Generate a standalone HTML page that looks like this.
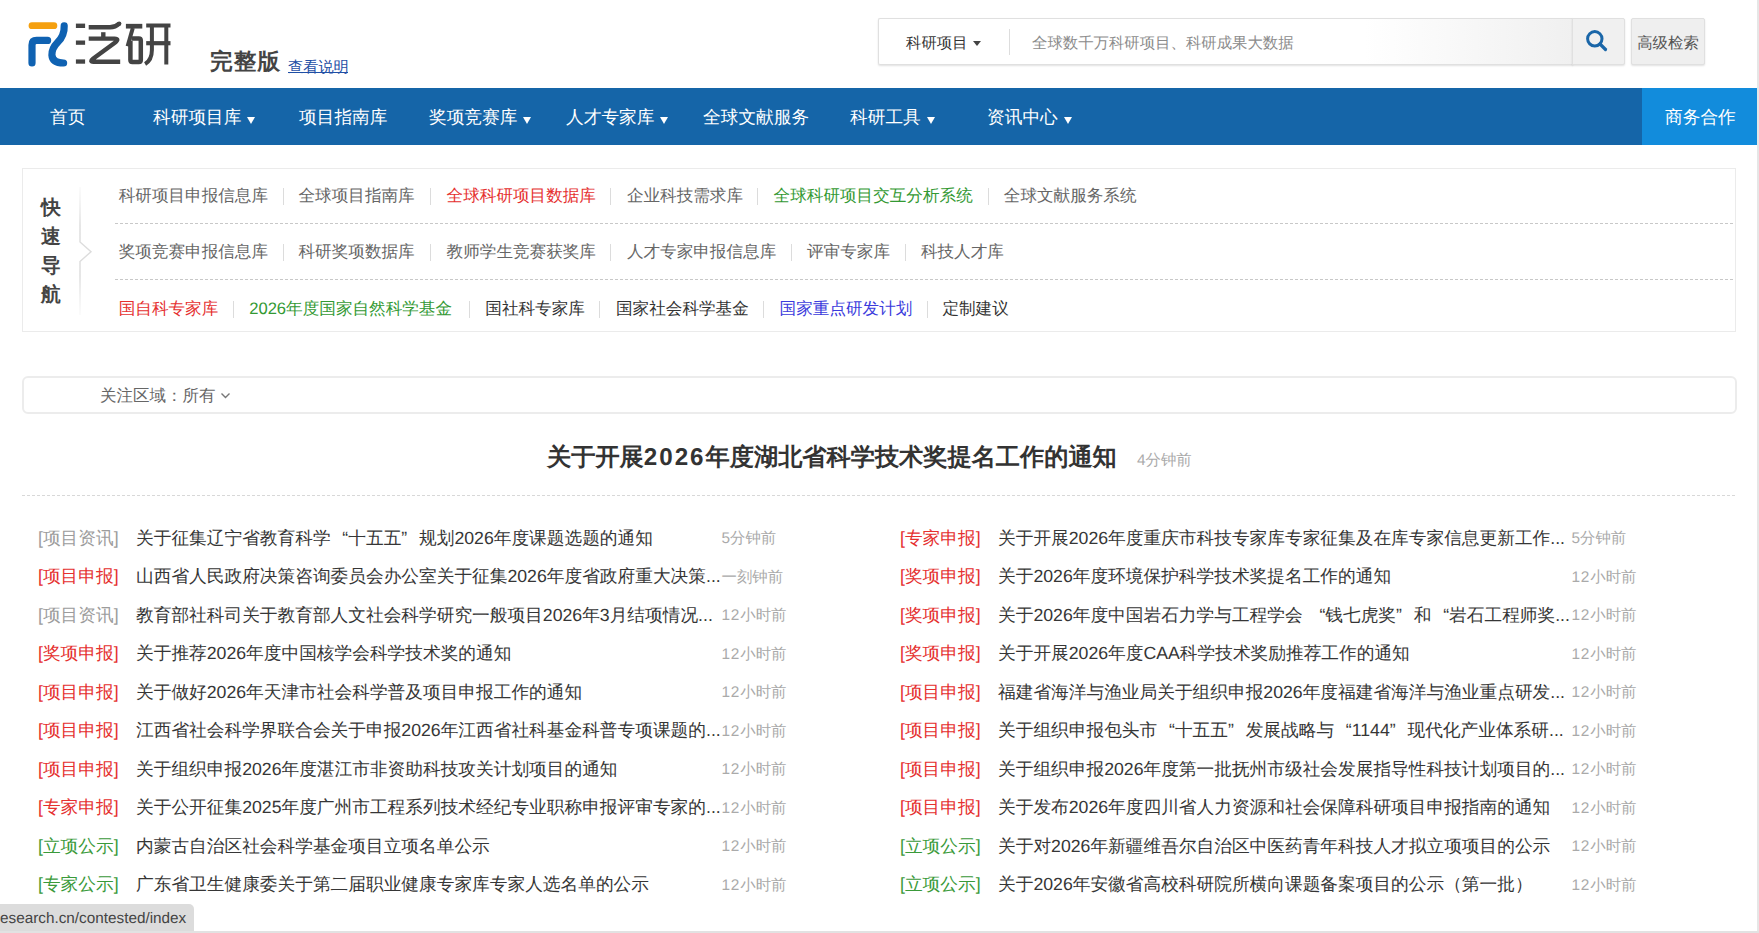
<!DOCTYPE html>
<html><head><meta charset="utf-8">
<style>
*{margin:0;padding:0;box-sizing:border-box}
html,body{width:1759px;height:933px;overflow:hidden;background:#fff}
body{font-family:"Liberation Sans",sans-serif;text-rendering:geometricPrecision;color:#333;position:relative}
.a{position:absolute;white-space:nowrap}
#frameR{position:absolute;left:1757px;top:0;width:2px;height:933px;background:#e6e6e6}
#frameB{position:absolute;left:0;top:931px;width:1759px;height:2px;background:#e2e2e2}

/* header */
#ver{left:210px;top:45.5px;font-size:22.6px;letter-spacing:1.1px;line-height:32px;font-weight:bold;color:#444}
#explain{left:288px;top:56.5px;font-size:15.2px;line-height:22px;color:#1f4fa5}
#expl_u{left:288px;top:72px;width:60px;height:1px;background:#1f4fa5}
#search{left:878px;top:18px;width:695px;height:47px;border:1px solid #e0e0e0;border-right:none;border-radius:2px 0 0 2px;
  background:linear-gradient(to right,#fff 0,#fff 70%,#f0f0f0 100%);box-shadow:0 1px 2px rgba(0,0,0,.12)}
#stype{left:906px;top:32.5px;font-size:15.4px;line-height:22px;font-weight:500;color:#333}
#stype i{position:absolute;left:67px;top:8.5px;width:0;height:0;border-left:4px solid transparent;border-right:4px solid transparent;border-top:5px solid #444}
#sdiv{left:1009px;top:29px;width:1px;height:26px;background:#ddd}
#sph{left:1032px;top:32.5px;font-size:15.4px;line-height:22px;color:#8c8c8c}
#sbtn{left:1572px;top:18px;width:53px;height:47px;border:1px solid #e0e0e0;border-radius:0 2px 2px 0;background:#f0f0f0;box-shadow:0 1px 2px rgba(0,0,0,.12)}
#adv{left:1631px;top:18px;width:74px;height:47px;border:1px solid #e0e0e0;border-radius:2px;background:#efefef;box-shadow:0 1px 2px rgba(0,0,0,.12);
  font-size:15.4px;line-height:50px;font-weight:500;color:#555;text-align:center}

/* nav */
#nav{left:0;top:88px;width:1757px;height:57px;background:#1565a8}
#biz{left:1642px;top:88px;width:115px;height:57px;background:#128cdc}
.ni{top:89.3px;line-height:57px;font-size:17.7px;color:#fff}
.ni i{display:inline-block;width:0;height:0;border-left:4px solid transparent;border-right:4px solid transparent;border-top:7px solid #fff;margin-left:6px;vertical-align:middle;position:relative;top:1.5px}

/* quick nav */
#qbox{left:22px;top:168px;width:1714px;height:164px;border:1px solid #ebebeb;background:#fff}
.qt{left:41px;font-size:19.8px;line-height:29px;font-weight:bold;color:#444}
.ql{left:115px;width:1620px;height:1px;background-image:linear-gradient(to right,#c8c8c8 0,#c8c8c8 3px,transparent 3px);background-size:5px 1px}
.qr{font-size:16.6px;line-height:24px;color:#666}
.qs{width:1px;height:17px;background:#dcdcdc}
.qr.red{color:#e5302f}.qr.grn{color:#339933}.qr.blk{color:#333}.qr.blu{color:#3b3bdc}

/* filter */
#fbox{left:21.5px;top:376px;width:1715px;height:38px;border:2px solid #ececec;border-radius:6px}
#ftxt{left:100px;top:385px;font-size:16.5px;line-height:22px;color:#666}

/* headline */
#head{left:547px;top:442px;font-size:24.2px;line-height:32px;font-weight:bold;color:#333}
#htime{left:1137px;top:450.7px;font-size:15.4px;line-height:20px;color:#aaa}
#hline{left:22px;top:495px;width:1714px;height:1px;background-image:linear-gradient(to right,#d8d8d8 0,#d8d8d8 3px,transparent 3px);background-size:5px 1px}

/* news rows */
.row{position:absolute;height:24px;width:800px;white-space:nowrap;font-size:17.7px;line-height:24px}
.row>span{position:absolute;top:0}
.tag{left:0}
.tag.g{color:#9c9c9c}.tag.r{color:#e5302f}.tag.n{color:#3a9a3a}
.tt{left:98px;color:#363636}
.tm{left:683.5px;font-size:15.4px;color:#aaa;top:1.8px !important}
.colR .tm{left:671.5px}
.d{letter-spacing:0.8px}
.q1{display:inline-block;width:1em;text-align:right}.q2{display:inline-block;width:1em;text-align:left}

/* status bar */
#status{left:0;top:904px;width:194px;height:27px;background:#dcdcdc;border-top-right-radius:5px}
#stxt{left:0;top:908px;font-size:15.3px;line-height:22px;color:#444;letter-spacing:0}
</style></head>
<body>
<!-- logo -->
<svg class="a" style="left:0;top:0" width="190" height="85" viewBox="0 0 190 85">
  <rect x="28.6" y="22.3" width="28.7" height="6.7" rx="3.35" fill="#f5a00f"/>
  <path d="M32 63 V45 Q32 40.4 36.6 40.4 H47.6" fill="none" stroke="#0f62b2" stroke-width="7.2" stroke-linecap="round" stroke-linejoin="round"/>
  <path d="M64.2 25.8 Q64.6 35.5 57.5 42.5 Q51.6 48.5 51.9 55 Q52.4 63 63.6 63" fill="none" stroke="#0f62b2" stroke-width="7.2" stroke-linecap="round"/>
  <g fill="#444">
    <rect x="75.9" y="23.6" width="9.2" height="4.4"/>
    <rect x="75.9" y="40.5" width="9.2" height="4.3"/>
    <rect x="75.9" y="59.4" width="9.2" height="4.3"/>
  </g>
  <g fill="none" stroke="#444" stroke-width="4.4" stroke-linecap="butt" stroke-linejoin="round">
    <path d="M88.7 27.2 H110 Q115.5 27.2 119.2 23.6"/><circle cx="119.2" cy="23.6" r="2.2" fill="#444" stroke="none"/>
    <path d="M103.3 32.2 V37"/>
    <path d="M88.7 38.6 H114.5 Q119.5 38.8 115.5 42.2 L93 58.8 Q89.2 61.7 93.5 61.7 H120.2"/>
    <path d="M125.9 26.2 H142.3" stroke-width="4.7"/>
    <path d="M132.8 28 L127.6 46.2" stroke-width="4"/>
    <path d="M130.4 41 V60 Q130.4 62 132.4 62 H138.8 Q140.8 62 140.8 60 V40.6 Q140.8 38.6 138.8 38.6 H131.5" stroke-width="4.5"/>
    <path d="M146.2 25.5 H170.5" stroke-width="4"/>
    <path d="M146.2 43.2 H170.5" stroke-width="4.2"/>
    <path d="M151.9 27 V50 Q151.9 60 145.1 64" stroke-width="4"/>
    <path d="M166.3 27 V64.5" stroke-width="4"/>
  </g>
</svg>
<div class="a" id="ver">完整版</div>
<div class="a" id="explain">查看说明</div><div class="a" id="expl_u"></div>

<div class="a" id="search"></div>
<div class="a" id="stype">科研项目<i></i></div>
<div class="a" id="sdiv"></div>
<div class="a" id="sph">全球数千万科研项目、科研成果大数据</div>
<div class="a" id="sbtn"></div>
<svg class="a" style="left:1584px;top:28px" width="26" height="26" viewBox="0 0 26 26">
  <circle cx="10.8" cy="10.8" r="7.2" fill="none" stroke="#1a66a8" stroke-width="3"/>
  <path d="M16 16 L21.5 21.5" stroke="#1a66a8" stroke-width="3.2" stroke-linecap="round"/>
</svg>
<div class="a" id="adv">高级检索</div>

<div class="a" id="nav"></div>
<div class="a" id="biz"></div>
<div class="a ni" style="left:50px">首页</div>
<div class="a ni" style="left:153px">科研项目库<i></i></div>
<div class="a ni" style="left:299px">项目指南库</div>
<div class="a ni" style="left:429px">奖项竞赛库<i></i></div>
<div class="a ni" style="left:566px">人才专家库<i></i></div>
<div class="a ni" style="left:703px">全球文献服务</div>
<div class="a ni" style="left:850px">科研工具<i></i></div>
<div class="a ni" style="left:987px">资讯中心<i></i></div>
<div class="a ni" style="left:1665px">商务合作</div>

<div class="a" id="qbox"></div>
<div class="a qt" style="top:193.5px">快</div>
<div class="a qt" style="top:222.5px">速</div>
<div class="a qt" style="top:251.5px">导</div>
<div class="a qt" style="top:280.5px">航</div>
<svg class="a" style="left:74px;top:185px" width="24" height="132" viewBox="0 0 24 132">
  <defs><linearGradient id="dg" x1="0" y1="0" x2="0" y2="1"><stop offset="0" stop-color="#e4e4e4" stop-opacity="0.2"/><stop offset="0.3" stop-color="#dcdcdc"/><stop offset="0.7" stop-color="#dcdcdc"/><stop offset="1" stop-color="#e4e4e4" stop-opacity="0.2"/></linearGradient></defs><path d="M6 2 V57 L17 66.7 L6 76.5 V130" fill="none" stroke="url(#dg)" stroke-width="1.4"/>
</svg>
<div class="a ql" style="top:223px"></div>
<div class="a ql" style="top:279px"></div>
<div class="a qr " style="left:118.7px;top:183.5px">科研项目申报信息库</div>
<div class="a qs" style="left:283.2px;top:188.0px"></div>
<div class="a qr " style="left:298.5px;top:183.5px">全球项目指南库</div>
<div class="a qs" style="left:430.2px;top:188.0px"></div>
<div class="a qr red" style="left:446.6px;top:183.5px">全球科研项目数据库</div>
<div class="a qs" style="left:610.1px;top:188.0px"></div>
<div class="a qr " style="left:626.9px;top:183.5px">企业科技需求库</div>
<div class="a qs" style="left:757.1px;top:188.0px"></div>
<div class="a qr grn" style="left:773.6px;top:183.5px">全球科研项目交互分析系统</div>
<div class="a qs" style="left:987.6px;top:188.0px"></div>
<div class="a qr " style="left:1003.8px;top:183.5px">全球文献服务系统</div>
<div class="a qr " style="left:118.7px;top:239.7px">奖项竞赛申报信息库</div>
<div class="a qs" style="left:283.2px;top:244.2px"></div>
<div class="a qr " style="left:298.5px;top:239.7px">科研奖项数据库</div>
<div class="a qs" style="left:430.2px;top:244.2px"></div>
<div class="a qr " style="left:446.6px;top:239.7px">教师学生竞赛获奖库</div>
<div class="a qs" style="left:610.1px;top:244.2px"></div>
<div class="a qr " style="left:626.9px;top:239.7px">人才专家申报信息库</div>
<div class="a qs" style="left:790.5px;top:244.2px"></div>
<div class="a qr " style="left:807.0px;top:239.7px">评审专家库</div>
<div class="a qs" style="left:904.7px;top:244.2px"></div>
<div class="a qr " style="left:920.9px;top:239.7px">科技人才库</div>
<div class="a qr red" style="left:118.7px;top:296.5px">国自科专家库</div>
<div class="a qs" style="left:232.8px;top:301.0px"></div>
<div class="a qr grn" style="left:249.2px;top:296.5px">2026年度国家自然科学基金</div>
<div class="a qs" style="left:469.4px;top:301.0px"></div>
<div class="a qr blk" style="left:485.3px;top:296.5px">国社科专家库</div>
<div class="a qs" style="left:599.0px;top:301.0px"></div>
<div class="a qr blk" style="left:616.0px;top:296.5px">国家社会科学基金</div>
<div class="a qs" style="left:763.2px;top:301.0px"></div>
<div class="a qr blu" style="left:779.6px;top:296.5px">国家重点研发计划</div>
<div class="a qs" style="left:926.9px;top:301.0px"></div>
<div class="a qr blk" style="left:942.4px;top:296.5px">定制建议</div>

<div class="a" id="fbox"></div>
<div class="a" id="ftxt">关注区域：所有</div>
<svg class="a" style="left:219px;top:391px" width="14" height="10" viewBox="0 0 14 10">
  <path d="M2.5 2.5 L6.5 6.5 L10.5 2.5" fill="none" stroke="#777" stroke-width="1.4"/>
</svg>

<div class="a" id="head">关于开展<span style="letter-spacing:2px">2026</span>年度湖北省科学技术奖提名工作的通知</div>
<div class="a" id="htime">4分钟前</div>
<div class="a" id="hline"></div>

<div class="row" style="left:38px;top:525.50px"><span class="tag g">[项目资讯]</span><span class="tt">关于征集辽宁省教育科学<span class="q1">“</span>十五五<span class="q2">”</span>规划2026年度课题选题的通知</span><span class="tm">5分钟前</span></div>
<div class="row" style="left:38px;top:564.00px"><span class="tag r">[项目申报]</span><span class="tt">山西省人民政府决策咨询委员会办公室关于征集2026年度省政府重大决策...</span><span class="tm">一刻钟前</span></div>
<div class="row" style="left:38px;top:602.50px"><span class="tag g">[项目资讯]</span><span class="tt">教育部社科司关于教育部人文社会科学研究一般项目2026年3月结项情况...</span><span class="tm"><span class=d>12</span>小时前</span></div>
<div class="row" style="left:38px;top:641.00px"><span class="tag r">[奖项申报]</span><span class="tt">关于推荐2026年度中国核学会科学技术奖的通知</span><span class="tm"><span class=d>12</span>小时前</span></div>
<div class="row" style="left:38px;top:679.50px"><span class="tag r">[项目申报]</span><span class="tt">关于做好2026年天津市社会科学普及项目申报工作的通知</span><span class="tm"><span class=d>12</span>小时前</span></div>
<div class="row" style="left:38px;top:718.00px"><span class="tag r">[项目申报]</span><span class="tt">江西省社会科学界联合会关于申报2026年江西省社科基金科普专项课题的...</span><span class="tm"><span class=d>12</span>小时前</span></div>
<div class="row" style="left:38px;top:756.50px"><span class="tag r">[项目申报]</span><span class="tt">关于组织申报2026年度湛江市非资助科技攻关计划项目的通知</span><span class="tm"><span class=d>12</span>小时前</span></div>
<div class="row" style="left:38px;top:795.00px"><span class="tag r">[专家申报]</span><span class="tt">关于公开征集2025年度广州市工程系列技术经纪专业职称申报评审专家的...</span><span class="tm"><span class=d>12</span>小时前</span></div>
<div class="row" style="left:38px;top:833.50px"><span class="tag n">[立项公示]</span><span class="tt">内蒙古自治区社会科学基金项目立项名单公示</span><span class="tm"><span class=d>12</span>小时前</span></div>
<div class="row" style="left:38px;top:872.00px"><span class="tag n">[专家公示]</span><span class="tt">广东省卫生健康委关于第二届职业健康专家库专家人选名单的公示</span><span class="tm"><span class=d>12</span>小时前</span></div>
<div class="row colR" style="left:900px;top:525.50px"><span class="tag r">[专家申报]</span><span class="tt">关于开展2026年度重庆市科技专家库专家征集及在库专家信息更新工作...</span><span class="tm">5分钟前</span></div>
<div class="row colR" style="left:900px;top:564.00px"><span class="tag r">[奖项申报]</span><span class="tt">关于2026年度环境保护科学技术奖提名工作的通知</span><span class="tm"><span class=d>12</span>小时前</span></div>
<div class="row colR" style="left:900px;top:602.50px"><span class="tag r">[奖项申报]</span><span class="tt">关于2026年度中国岩石力学与工程学会 <span class="q1">“</span>钱七虎奖<span class="q2">”</span>和<span class="q1">“</span>岩石工程师奖...</span><span class="tm"><span class=d>12</span>小时前</span></div>
<div class="row colR" style="left:900px;top:641.00px"><span class="tag r">[奖项申报]</span><span class="tt">关于开展2026年度CAA科学技术奖励推荐工作的通知</span><span class="tm"><span class=d>12</span>小时前</span></div>
<div class="row colR" style="left:900px;top:679.50px"><span class="tag r">[项目申报]</span><span class="tt">福建省海洋与渔业局关于组织申报2026年度福建省海洋与渔业重点研发...</span><span class="tm"><span class=d>12</span>小时前</span></div>
<div class="row colR" style="left:900px;top:718.00px"><span class="tag r">[项目申报]</span><span class="tt">关于组织申报包头市<span class="q1">“</span>十五五<span class="q2">”</span>发展战略与<span class="q1">“</span>1144<span class="q2">”</span>现代化产业体系研...</span><span class="tm"><span class=d>12</span>小时前</span></div>
<div class="row colR" style="left:900px;top:756.50px"><span class="tag r">[项目申报]</span><span class="tt">关于组织申报2026年度第一批抚州市级社会发展指导性科技计划项目的...</span><span class="tm"><span class=d>12</span>小时前</span></div>
<div class="row colR" style="left:900px;top:795.00px"><span class="tag r">[项目申报]</span><span class="tt">关于发布2026年度四川省人力资源和社会保障科研项目申报指南的通知</span><span class="tm"><span class=d>12</span>小时前</span></div>
<div class="row colR" style="left:900px;top:833.50px"><span class="tag n">[立项公示]</span><span class="tt">关于对2026年新疆维吾尔自治区中医药青年科技人才拟立项项目的公示</span><span class="tm"><span class=d>12</span>小时前</span></div>
<div class="row colR" style="left:900px;top:872.00px"><span class="tag n">[立项公示]</span><span class="tt">关于2026年安徽省高校科研院所横向课题备案项目的公示（第一批）</span><span class="tm"><span class=d>12</span>小时前</span></div>

<div class="a" id="status"></div>
<div class="a" id="stxt">esearch.cn/contested/index</div>
<div id="frameR"></div>
<div id="frameB"></div>
</body></html>
